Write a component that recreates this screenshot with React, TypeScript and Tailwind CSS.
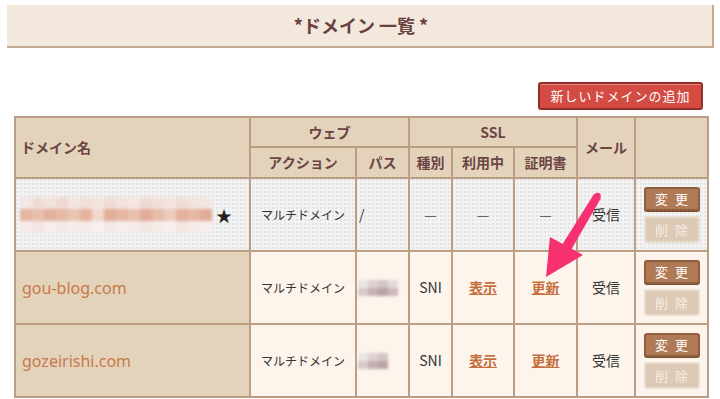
import React from "react";

const jp = "font-['Noto_Sans_CJK_JP','Noto_Sans',sans-serif]";

// pixelated blur blocks (colours of the masked domain)
const maskRow1 = [
  ["#f3e6e3", "#f0dcd6", "#f2e2dd", "#efd8d0", "#f4e5e1", "#f1dfd8", "#f3e4e0", "#f0dbd4", "#f2e1dc", "#f4e6e2", "#efdad2", "#f2e0da", "#f3e4df", "#f0ddd6", "#f2e3de", "#f3e6e2"],
  ["#e4b6a2", "#e8c0ae", "#e2b09b", "#e6bba7", "#e9c4b3", "#e3b39e", "#f0d8ce", "#e2ae98", "#e5b7a3", "#e8bfad", "#e1ad97", "#e7bca9", "#ecccbe", "#e3b19c", "#e6b9a5", "#e0ab94"],
  ["#f5ebe8", "#f3e6e2", "#f6eeec", "#f4e9e6", "#f6edea", "#f5ebe8", "#f7f0ee", "#f4e8e4", "#f6eeeb", "#f5eae7", "#f4e7e3", "#f6edea", "#f7efed", "#f3e5e1", "#f5ece9", "#f6eeeb"],
];

const maskPath = [
  ["#ece4e4", "#dcd0d0", "#d2c4c4", "#e4dada"],
  ["#d8c8c8", "#c4b0b2", "#b8a2a4", "#cbb8ba"],
];

const Pixels = ({ rows, size }: { rows: string[][]; size: string }) => (
  <div className="flex flex-col blur-[1.5px]">
    {rows.map((r, i) => (
      <div key={i} className="flex">
        {r.map((c, j) => (
          <div key={j} className={size} style={{ backgroundColor: c }} />
        ))}
      </div>
    ))}
  </div>
);

const EditButtons = () => (
  <div className="flex flex-col items-center gap-[5px]">
    <button className="w-[56px] h-[24px] rounded-[3px] bg-[#b07a56] border-2 border-[#8f5f40] text-white text-[13px] tracking-[7px] pl-[7px] leading-none shadow-[0_1px_0_#7a4d33]">
      変更
    </button>
    <button className="w-[56px] h-[27px] rounded-[3px] bg-[#dcc9b6] border-2 border-[#e9ddd0] text-[#f5eee6] text-[13px] tracking-[7px] pl-[7px] leading-none">
      削除
    </button>
  </div>
);

const th = "border-2 border-[#bb9e83] bg-[#e4d3bb] text-[#6b4444] font-bold text-[14px] text-center p-0";
const td = "border-2 border-[#bb9e83] text-center text-[#333] p-0";
const link = "text-[#c46f3c] underline font-semibold text-[14px]";
const dash = "font-['Noto_Sans',sans-serif] text-[#666] text-[12px]";

const App = () => {
  return (
    <div className={`relative w-[720px] h-[399px] bg-white overflow-hidden ${jp}`}>
      <div className="mt-[5px] ml-[7px] w-[707px] h-[43px] bg-[#f2e8dc] border-b-2 border-r-2 border-[#c4a991] flex items-center justify-center">
        <h1 className="text-[18px] font-bold text-[#6a4141] pl-[3px]">*ドメイン 一覧 *</h1>
      </div>

      <div className="flex justify-end mt-[34px] pr-[17px]">
        <button className="w-[165px] h-[28px] rounded-[3px] bg-[#d34c43] border-2 border-[#922f29] text-white text-[13px] tracking-[1px] shadow-[inset_0_1px_0_#e88a80]">
          新しいドメインの追加
        </button>
      </div>

      <table className="mt-[6px] ml-[14px] w-[693px] table-fixed border-collapse">
        <colgroup>
          <col className="w-[235px]" />
          <col className="w-[106px]" />
          <col className="w-[53px]" />
          <col className="w-[43px]" />
          <col className="w-[62px]" />
          <col className="w-[63px]" />
          <col className="w-[58px]" />
          <col className="w-[73px]" />
        </colgroup>
        <thead>
          <tr className="h-[30px]">
            <th rowSpan={2} className={`${th} text-left pl-[5px]`}>ドメイン名</th>
            <th colSpan={2} className={th}>ウェブ</th>
            <th colSpan={3} className={th}>SSL</th>
            <th rowSpan={2} className={th}>メール</th>
            <th rowSpan={2} className={th}></th>
          </tr>
          <tr className="h-[31px]">
            <th className={th}>アクション</th>
            <th className={th}>パス</th>
            <th className={th}>種別</th>
            <th className={th}>利用中</th>
            <th className={th}>証明書</th>
          </tr>
        </thead>
        <tbody className="text-[14px]">
          <tr className="h-[73px] bg-[#f3f3f3] bg-[radial-gradient(#e2e2e2_0.8px,transparent_0.8px)] bg-[length:4px_4px]">
            <td className={`${td} text-left pl-[4px]`}>
              <div className="flex items-center gap-[4px]">
                <Pixels rows={maskRow1} size="w-[12px] h-[12px]" />
                <span className="text-[16px] text-[#222]">★</span>
              </div>
            </td>
            <td className={`${td} text-[12px]`}>マルチドメイン</td>
            <td className={`${td} text-left pl-[2px]`}>/</td>
            <td className={td}><span className={dash}>—</span></td>
            <td className={td}><span className={dash}>—</span></td>
            <td className={td}><span className={dash}>—</span></td>
            <td className={td}>受信</td>
            <td className={td}>
              <EditButtons />
            </td>
          </tr>
          {["gou-blog.com", "gozeirishi.com"].map((d, i) => (
            <tr key={d} className="h-[73px] bg-[#fdf5ec]">
              <td className={`${td} bg-[#e4d3bb] text-left pl-[6px]`}>
                <span className="font-['Noto_Sans',sans-serif] text-[16px] text-[#c77a4b]">{d}</span>
              </td>
              <td className={`${td} text-[12px]`}>マルチドメイン</td>
              <td className={`${td} text-left`}>
                <div className="ml-[1px]">
                  <Pixels rows={maskPath.map((r) => (i === 0 ? r : r.slice(0, 3)))} size="w-[10px] h-[8px]" />
                </div>
              </td>
              <td className={td}>SNI</td>
              <td className={td}>
                <span className={link}>表示</span>
              </td>
              <td className={td}>
                <span className={link}>更新</span>
              </td>
              <td className={td}>受信</td>
              <td className={td}>
                <EditButtons />
              </td>
            </tr>
          ))}
        </tbody>
      </table>

      {/* annotation arrow */}
      <svg className="absolute left-0 top-0 pointer-events-none" width="720" height="399">
        <path d="M594 194 Q597 195 601 198 L571 250 L562 245 Z" fill="#f7306f" />
        <circle cx="597.5" cy="196" r="3.2" fill="#f7306f" />
        <polygon points="546,277 550,237 583,255" fill="#f7306f" />
      </svg>
    </div>
  );
};

export default App;
